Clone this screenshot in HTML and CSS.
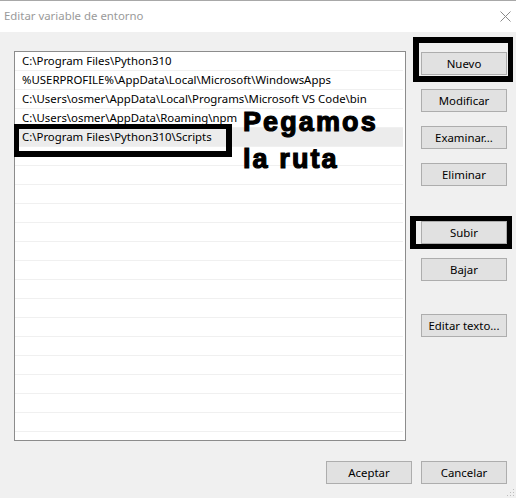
FILE: index.html
```html
<!DOCTYPE html>
<html lang="es">
<head>
<meta charset="utf-8">
<title>Editar variable de entorno</title>
<link rel="stylesheet" href="styles.css">
</head>
<body>
<div class="window">
  <div class="titlebar">
    <span class="title">Editar variable de entorno</span>
    <svg class="close" width="11" height="11" viewBox="0 0 11 11"><path d="M0.5 0.5 L10.5 10.5 M10.5 0.5 L0.5 10.5" stroke="#8a8a8a" stroke-width="1" fill="none"/></svg>
  </div>
  <div class="body">
    <div class="list">
      <div class="row">C:\Program Files\Python310</div>
      <div class="row">%USERPROFILE%\AppData\Local\Microsoft\WindowsApps</div>
      <div class="row">C:\Users\osmer\AppData\Local\Programs\Microsoft VS Code\bin</div>
      <div class="row">C:\Users\osmer\AppData\Roaming\npm</div>
      <div class="row selected">C:\Program Files\Python310\Scripts</div>
      <div class="row"></div>
      <div class="row"></div>
      <div class="row"></div>
      <div class="row"></div>
      <div class="row"></div>
      <div class="row"></div>
      <div class="row"></div>
      <div class="row"></div>
      <div class="row"></div>
      <div class="row"></div>
      <div class="row"></div>
      <div class="row"></div>
      <div class="row"></div>
      <div class="row"></div>
      <div class="row"></div>
      <div class="row"></div>
    </div>
    <div class="side">
      <button class="btn">Nuevo</button>
      <button class="btn">Modificar</button>
      <button class="btn">Examinar...</button>
      <button class="btn">Eliminar</button>
      <button class="btn gap-big">Subir</button>
      <button class="btn">Bajar</button>
      <button class="btn gap-mid">Editar texto...</button>
    </div>
  </div>
  <div class="footer">
    <button class="btn">Aceptar</button>
    <button class="btn">Cancelar</button>
  </div>

  <div class="mark mark-nuevo"></div>
  <div class="mark mark-scripts"></div>
  <div class="mark mark-subir"></div>
  <div class="note">Pegamos<br>la ruta</div>
  <svg class="grip" width="8" height="8" viewBox="0 0 8 8">
    <rect x="6" y="0" width="1" height="1" fill="#bdbdbd"/>
    <rect x="3" y="3" width="1" height="1" fill="#bdbdbd"/>
    <rect x="6" y="3" width="1" height="1" fill="#bdbdbd"/>
    <rect x="0" y="6" width="1" height="1" fill="#bdbdbd"/>
    <rect x="3" y="6" width="1" height="1" fill="#bdbdbd"/>
    <rect x="6" y="6" width="1" height="1" fill="#bdbdbd"/>
  </svg>
</div>
</body>
</html>
```

FILE: styles.css
```css
* { box-sizing: border-box; }
html, body { margin: 0; padding: 0; }
body {
  width: 516px;
  height: 498px;
  overflow: hidden;
  background: #f0f0f0;
  font-family: "Noto Sans", "Open Sans", sans-serif;
  font-size: 11.4px;
  color: #000;
}
.window {
  position: relative;
  width: 516px;
  height: 498px;
  background: #f0f0f0;
}
.titlebar {
  height: 32px;
  background: #fff;
  border-top: 1px solid #a8a8a8;
  display: flex;
  align-items: center;
  justify-content: space-between;
  padding: 0 5px 0 4px;
}
.title {
  color: #9a9a9a;
  font-size: 11.4px;
  line-height: 16px;
  margin-top: -1px;
}
.close { display: block; margin-top: -1px; }
.body {
  display: flex;
  gap: 15px;
  padding: 19px 9px 0 14px;
}
.list {
  width: 392px;
  height: 390px;
  border: 1px solid #8c8c8c;
  background: #fff;
  overflow: hidden;
  padding-right: 2px;
}
.row {
  height: 19px;
  border-bottom: 1px solid #f0f0f0;
  padding-left: 7px;
  line-height: 18px;
  white-space: nowrap;
}
.row.selected { background: #ececec; }
.side {
  display: flex;
  flex-direction: column;
  gap: 14px;
  padding-top: 1px;
}
.btn {
  width: 86px;
  height: 23px;
  margin: 0;
  padding: 0;
  background: #e1e1e1;
  border: 1px solid #adadad;
  font-family: inherit;
  font-size: 11.4px;
  line-height: 20px;
  color: #000;
}
.side .gap-big { margin-top: 21px; }
.side .gap-mid { margin-top: 19px; }
.footer {
  display: flex;
  justify-content: flex-end;
  gap: 9px;
  padding: 20px 9px 0 0;
}
.mark {
  position: absolute;
  border: 6px solid #000;
}
.mark-nuevo {
  left: 413px; top: 37px; width: 100px; height: 45px;
  border-right-width: 5px;
}
.mark-scripts {
  left: 14px; top: 124px; width: 218px; height: 33px;
  border-width: 5px 6px 6px 5px;
}
.mark-subir {
  left: 410px; top: 216px; width: 102px; height: 33px;
  border-width: 5px 5px 5px 6px;
}
.note {
  position: absolute;
  left: 243px;
  top: 104px;
  font-family: "Liberation Sans", Arial, sans-serif;
  font-weight: bold;
  font-size: 27px;
  line-height: 37px;
  letter-spacing: 2.1px;
  color: #000;
  -webkit-text-stroke: 1.2px #000;
}
.grip {
  position: absolute;
  right: 1px;
  bottom: 1px;
}
```
